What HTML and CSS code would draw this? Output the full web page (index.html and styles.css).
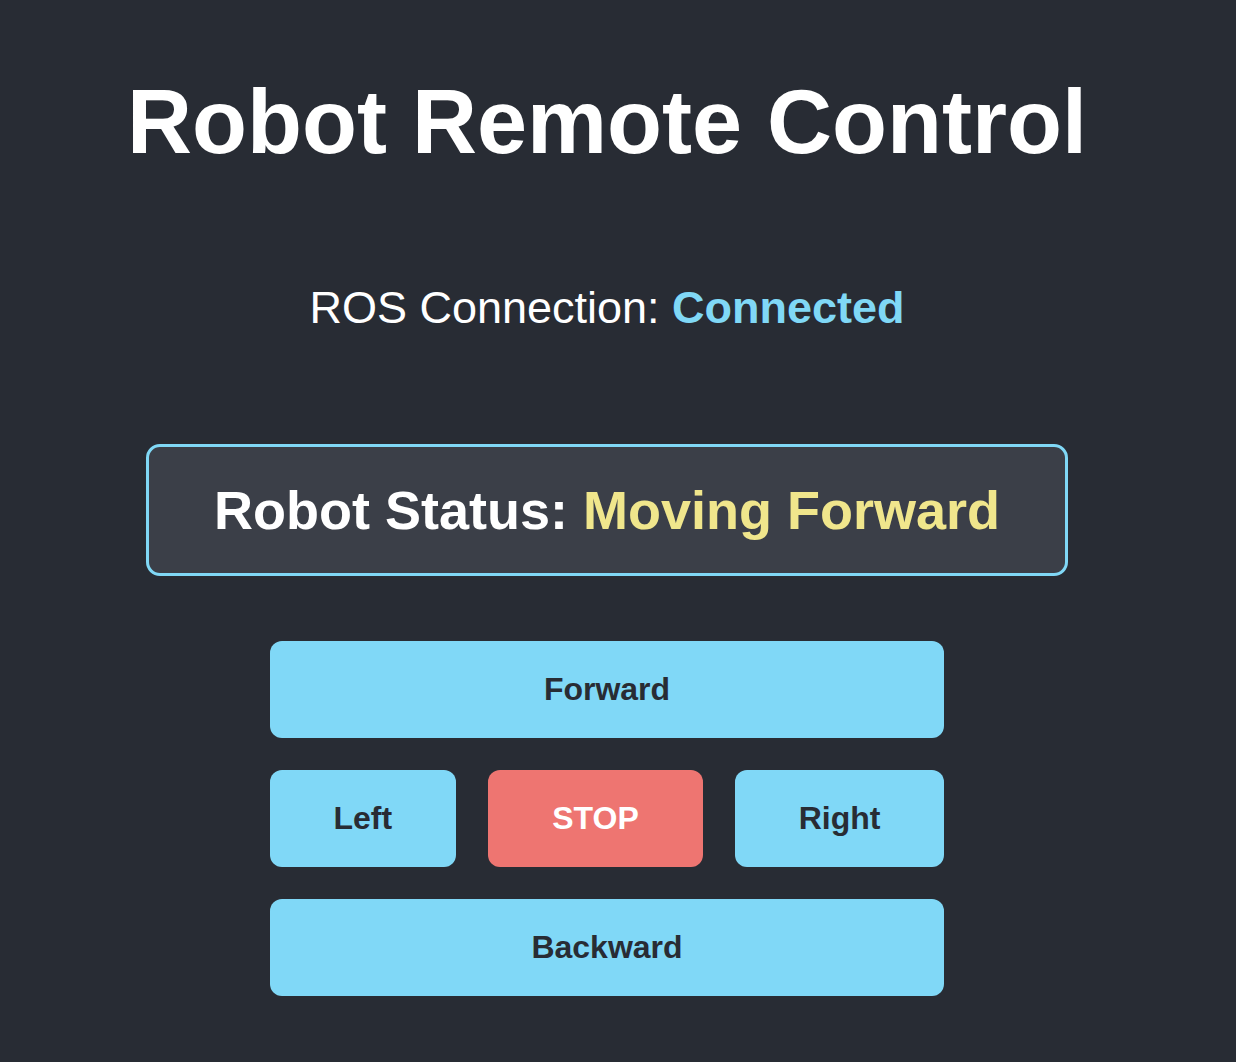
FILE: index.html
```html
<!DOCTYPE html>
<html lang="en">
<head>
<meta charset="utf-8">
<title>Robot Remote Control</title>
<link rel="stylesheet" href="styles.css">
</head>
<body>
<div class="app">
  <h1 class="title">Robot Remote Control</h1>
  <p class="conn">ROS Connection: <span class="conn-state">Connected</span></p>
  <div class="status">Robot Status: <span class="status-value">Moving Forward</span></div>
  <div class="controls">
    <button class="btn btn-wide">Forward</button>
    <div class="row">
      <button class="btn">Left</button>
      <button class="btn btn-stop">STOP</button>
      <button class="btn">Right</button>
    </div>
    <button class="btn btn-wide">Backward</button>
  </div>
</div>
</body>
</html>
```
FILE: styles.css
```css
html, body {
  margin: 0;
  background: #282c34;
}
body {
  font-family: "Liberation Sans", Arial, Helvetica, sans-serif;
  color: #ffffff;
}
.app {
  width: 1214px;
  display: flex;
  flex-direction: column;
  align-items: center;
  padding-top: 71px;
  min-height: 1062px;
  box-sizing: border-box;
}
.title {
  margin: 0;
  font-size: 90px;
  font-weight: 700;
  line-height: normal;
}
.conn {
  margin: 108px 0 0;
  font-size: 45px;
  line-height: normal;
}
.conn-state {
  font-weight: 700;
  color: #80d8f6;
}
.status {
  margin-top: 110px;
  width: 922px;
  box-sizing: border-box;
  padding: 32px 0;
  border: 3px solid #80d8f6;
  border-radius: 14px;
  background: #3b3f48;
  text-align: center;
  font-size: 54px;
  font-weight: 700;
  line-height: normal;
}
.status-value {
  color: #f0e68c;
}
.controls {
  margin-top: 65px;
  display: flex;
  flex-direction: column;
  gap: 32px;
}
.row {
  display: flex;
  gap: 32px;
}
.btn {
  font-family: "Liberation Sans", Arial, Helvetica, sans-serif;
  font-size: 32px;
  font-weight: 700;
  line-height: normal;
  padding: 30px 64px;
  border: none;
  border-radius: 12px;
  background: #80d8f7;
  color: #282c34;
}
.btn-wide {
  width: 100%;
}
.btn-stop {
  background: #ee7571;
  color: #ffffff;
}
```
